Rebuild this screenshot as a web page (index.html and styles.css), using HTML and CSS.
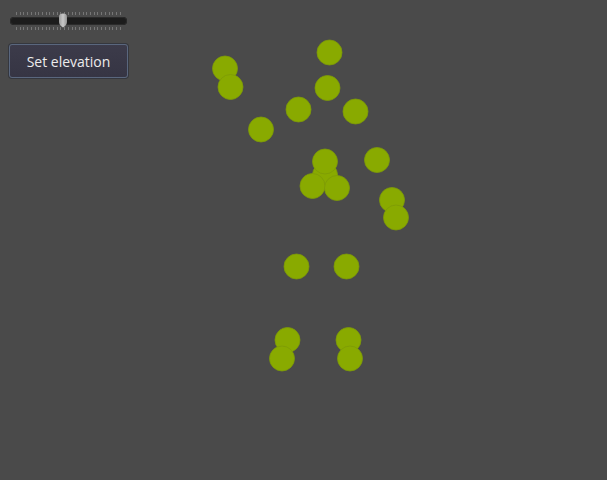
FILE: index.html
```html
<!DOCTYPE html>
<html>
<head>
<meta charset="utf-8">
<link rel="stylesheet" href="styles.css">
</head>
<body>
<div class="app">
  <div class="panel">
    <div class="slider">
      <div class="ticks ticks-top"></div>
      <div class="track">
        <svg class="thumb" width="10" height="15" viewBox="0 0 10 15">
          <defs>
            <linearGradient id="tg" x1="0" x2="1" y1="0" y2="0">
              <stop offset="0" stop-color="#9c9c9c"/>
              <stop offset="0.5" stop-color="#c8c8c8"/>
              <stop offset="1" stop-color="#939393"/>
            </linearGradient>
          </defs>
          <path d="M1 3.5 Q1 0.5 5 0.5 Q9 0.5 9 3.5 L9 9 Q9 12 5 14.5 Q1 12 1 9 Z" fill="url(#tg)"/>
        </svg>
      </div>
      <div class="ticks ticks-bottom"></div>
    </div>
    <button class="btn">Set elevation</button>
  </div>
  <svg class="skeleton" width="607" height="480" viewBox="0 0 607 480">
    <g class="joints">
      <circle cx="329.5" cy="52.5" r="12.5"/>
      <circle cx="225" cy="68.5" r="12.5"/>
      <circle cx="230.5" cy="87" r="12.5"/>
      <circle cx="327.5" cy="88" r="12.5"/>
      <circle cx="298.5" cy="109.5" r="12.5"/>
      <circle cx="355.5" cy="111.5" r="12.5"/>
      <circle cx="261" cy="129.5" r="12.5"/>
      <circle cx="325" cy="175" r="12.5"/>
      <circle cx="325" cy="161.5" r="12.5"/>
      <circle cx="377" cy="160" r="12.5"/>
      <circle cx="312.5" cy="186" r="12.5"/>
      <circle cx="337" cy="188" r="12.5"/>
      <circle cx="392" cy="200" r="12.5"/>
      <circle cx="396" cy="217.5" r="12.5"/>
      <circle cx="296.5" cy="266.5" r="12.5"/>
      <circle cx="346.5" cy="266.5" r="12.5"/>
      <circle cx="287.5" cy="340" r="12.5"/>
      <circle cx="282" cy="358.5" r="12.5"/>
      <circle cx="348.5" cy="340" r="12.5"/>
      <circle cx="350" cy="358.5" r="12.5"/>
    </g>
  </svg>
</div>
</body>
</html>
```
FILE: styles.css
```css
html, body {
  margin: 0;
  padding: 0;
  background: #4a4a4a;
  width: 607px;
  height: 480px;
  overflow: hidden;
}

.app {
  position: relative;
  width: 607px;
  height: 480px;
  font-family: "Open Sans", "DejaVu Sans", sans-serif;
}

.panel {
  display: flex;
  flex-direction: column;
  align-items: flex-start;
  padding: 12px 0 0 9px;
  gap: 4px;
  position: relative;
  z-index: 1;
}

.slider {
  width: 119px;
  display: flex;
  flex-direction: column;
  gap: 2px;
}

.ticks {
  height: 3px;
  margin: 0 6px 0 7px;
  background: repeating-linear-gradient(to right, #767676 0 1px, transparent 1px 3.7px);
}

.track {
  position: relative;
  height: 8px;
  margin: 0 1px;
  background: #1c1c1c;
  border-radius: 4px;
  box-shadow: inset 0 0 0 1px #2a2a2a;
}

.thumb {
  position: absolute;
  left: 48px;
  top: -4px;
  display: block;
}

.btn {
  margin-top: 10px;
  margin-left: 0;
  width: 119px;
  height: 34px;
  padding: 0;
  background: linear-gradient(#3c3b4a, #363544);
  border: 1px solid #5a677e;
  border-radius: 3px;
  box-shadow: 0 0 0 1px #35373e;
  color: #ececec;
  font-family: "Open Sans", "DejaVu Sans", sans-serif;
  font-size: 14px;
  line-height: 31px;
  text-align: center;
}

.skeleton {
  position: absolute;
  left: 0;
  top: 0;
}

.joints circle {
  fill: #89aa00;
  stroke: #7e9a06;
  stroke-width: 0.8;
}
```
